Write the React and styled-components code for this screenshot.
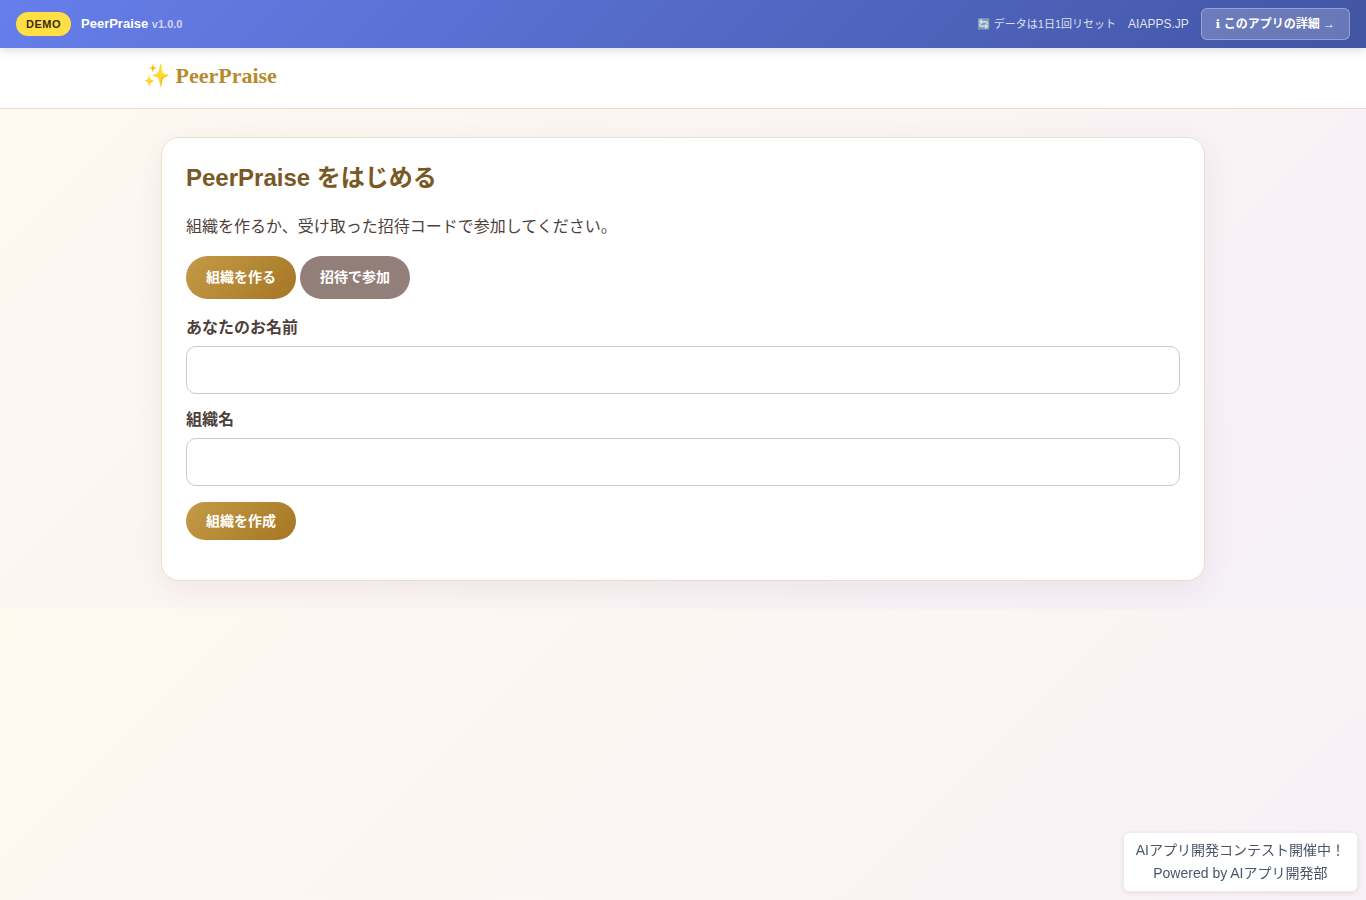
import React from 'react';
import styled, { createGlobalStyle } from 'styled-components';

const GlobalStyle = createGlobalStyle`
  *, *::before, *::after {
    box-sizing: border-box;
  }

  body {
    margin: 0;
    color: #4e3f3c;
    font-family: "Liberation Sans", "Noto Sans CJK JP", sans-serif;
    font-size: 16px;
    line-height: 26px;
    background: linear-gradient(135deg, #fff9f0 0%, #f6f0f8 100%);
  }
`;

const DemoBar = styled.div`
  position: sticky;
  top: 0;
  z-index: 10;
  display: flex;
  align-items: center;
  justify-content: space-between;
  height: 48px;
  padding: 0 16px;
  color: #fff;
  background: linear-gradient(135deg, #667eea 0%, #4255a4 100%);
  box-shadow: 0 2px 10px rgba(0, 0, 0, 0.15);
`;

const BarGroup = styled.div`
  display: flex;
  align-items: center;
  gap: ${props => props.$gap};
`;

const Badge = styled.span`
  padding: 4px 10px;
  border-radius: 12px;
  background: #ffdf43;
  color: #3b2a10;
  font-size: 11px;
  font-weight: 700;
  line-height: 16px;
  letter-spacing: 0.5px;
`;

const AppName = styled.span`
  font-size: 13px;
  font-weight: 700;
  line-height: 20px;
`;

const Version = styled.span`
  font-size: 11px;
  opacity: 0.7;
`;

const ResetNote = styled.span`
  font-size: 11px;
  line-height: 16px;
  opacity: 0.8;
`;

const SiteLink = styled.a`
  color: rgba(255, 255, 255, 0.85);
  font-size: 12px;
  line-height: 18px;
  text-decoration: none;
`;

const DetailLink = styled.a`
  padding: 6px 14px;
  border: 1px solid rgba(255, 255, 255, 0.3);
  border-radius: 6px;
  background: rgba(255, 255, 255, 0.2);
  color: #fff;
  font-size: 12px;
  font-weight: 700;
  line-height: 18px;
  text-decoration: none;
`;

const InfoMark = styled.span`
  font-family: "DejaVu Sans", sans-serif;
  line-height: 1;
`;

const Header = styled.header`
  padding: 12px 0 16px;
  border-bottom: 1px solid #eadfc8;
  background: #fff;
`;

const HeaderInner = styled.div`
  max-width: 1100px;
  margin: 0 auto;
  padding: 0 10px;
`;

const Logo = styled.a`
  display: block;
  color: #b78a2d;
  font-family: "Liberation Serif", serif;
  font-size: 22px;
  font-weight: 700;
  line-height: 32px;
  text-decoration: none;
`;

const Main = styled.main`
  max-width: 1100px;
  margin: 0 auto;
  padding: 28px;
`;

const Card = styled.section`
  padding: 24px 24px 40px;
  border: 1px solid #eadfcf;
  border-radius: 18px;
  background: #fff;
  box-shadow: 0 8px 30px rgba(78, 63, 60, 0.08);
`;

const Title = styled.h1`
  margin: 0 0 20px;
  color: #795825;
  font-size: 24px;
  line-height: 32px;
`;

const Lead = styled.p`
  margin: 0 0 16px;
`;

const Tabs = styled.div`
  display: flex;
  gap: 4px;
  margin-bottom: 16px;
`;

const Button = styled.button`
  padding: ${props => (props.$tall ? '10px' : '8px')} 20px;
  border: 0;
  border-radius: 999px;
  background: ${props =>
    props.$muted ? '#937f79' : 'linear-gradient(135deg, #c59b48, #a57623)'};
  color: #fff;
  font-family: inherit;
  font-size: 14px;
  font-weight: 700;
  line-height: ${props => (props.$tall ? '23px' : '22px')};
  cursor: pointer;
`;

const Field = styled.div`
  margin-bottom: ${props => (props.$last ? '16px' : '13px')};
`;

const Label = styled.label`
  display: block;
  margin-bottom: 5px;
  font-weight: 700;
`;

const Input = styled.input`
  display: block;
  width: 100%;
  height: 48px;
  padding: 10px 12px;
  border: 1px solid #d6c9b8;
  border-radius: 10px;
  background: #fff;
  color: inherit;
  font: inherit;
`;

const Notice = styled.aside`
  position: fixed;
  right: 8px;
  bottom: 8px;
  display: flex;
  flex-direction: column;
  align-items: center;
  padding: 6px 12px;
  border: 1px solid #edeaf0;
  border-radius: 6px;
  background: rgba(255, 255, 255, 0.95);
  box-shadow: 0 1px 4px rgba(0, 0, 0, 0.1);
  font-size: 14px;
  line-height: 23px;
`;

const NoticeLink = styled.a`
  color: #4a5568;
  text-decoration: none;
`;

export default function App () {
  return (
    <>
      <GlobalStyle />
      <DemoBar lang="ja">
        <BarGroup $gap="10px">
          <Badge>DEMO</Badge>
          <AppName>
            PeerPraise <Version>v1.0.0</Version>
          </AppName>
        </BarGroup>
        <BarGroup $gap="12px">
          <ResetNote>🔄 データは1日1回リセット</ResetNote>
          <SiteLink href="#">AIAPPS.JP</SiteLink>
          <DetailLink href="#">
            <InfoMark>ℹ</InfoMark> このアプリの詳細 →
          </DetailLink>
        </BarGroup>
      </DemoBar>

      <Header>
        <HeaderInner>
          <Logo href="#">✨ PeerPraise</Logo>
        </HeaderInner>
      </Header>

      <Main lang="ja">
        <Card>
          <Title>PeerPraise をはじめる</Title>
          <Lead>組織を作るか、受け取った招待コードで参加してください。</Lead>
          <Tabs>
            <Button type="button" $tall>組織を作る</Button>
            <Button type="button" $tall $muted>招待で参加</Button>
          </Tabs>
          <form onSubmit={event => event.preventDefault ()}>
            <Field>
              <Label htmlFor="user-name">あなたのお名前</Label>
              <Input id="user-name" type="text" />
            </Field>
            <Field $last>
              <Label htmlFor="org-name">組織名</Label>
              <Input id="org-name" type="text" />
            </Field>
            <Button type="submit">組織を作成</Button>
          </form>
        </Card>
      </Main>

      <Notice lang="ja">
        <NoticeLink href="#">AIアプリ開発コンテスト開催中！</NoticeLink>
        <NoticeLink href="#">Powered by AIアプリ開発部</NoticeLink>
      </Notice>
    </>
  );
}
